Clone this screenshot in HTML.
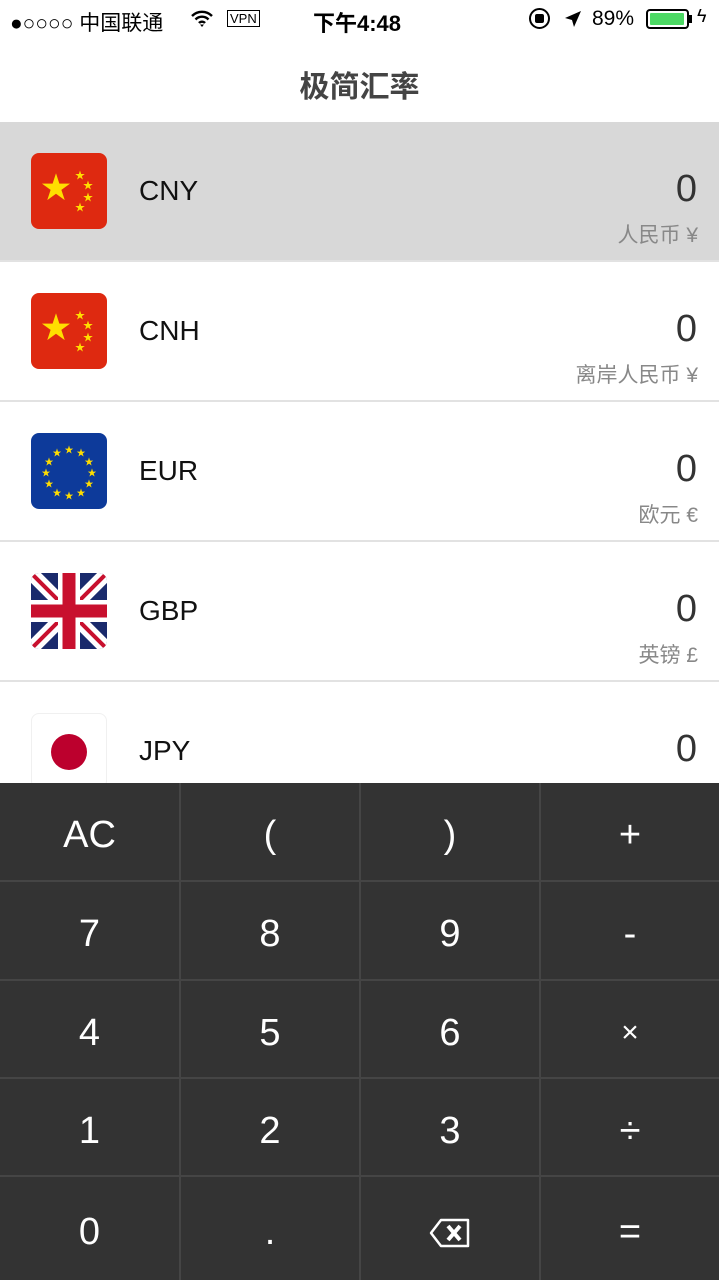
<!DOCTYPE html>
<html><head><meta charset="utf-8"><style>
*{margin:0;padding:0;box-sizing:border-box}
body{width:719px;height:1280px;overflow:hidden;background:#fff;position:relative;font-family:"Liberation Sans","Noto Sans CJK SC",sans-serif}
.abs{position:absolute}
.row{position:absolute;left:0;width:719px;height:140px;border-bottom:2px solid #e2e2e2;background:#fff}
.flag{position:absolute;left:31px;top:31px;width:76px;height:76px;border-radius:8px;overflow:hidden}
.code{position:absolute;left:139px;top:53px;font-size:28px;color:#111}
.val{position:absolute;right:22px;top:46px;font-size:38px;color:#333;font-weight:300}
.name{position:absolute;right:21px;top:97px;font-size:21px;color:#888}
.kb{position:absolute;left:0;top:783px;width:719px;height:497px;background:#454545}
.k{position:absolute;background:#333;color:#fff;font-size:38px;display:flex;align-items:center;justify-content:center;font-weight:300;padding-top:8px}
</style></head><body>
<div class="abs" style="left:10px;top:7px;font-size:21px;color:#000;white-space:nowrap">●○○○○ 中国联通</div>
<svg class="abs" style="left:190px;top:10px" width="24" height="18" viewBox="0 0 24 18"><path d="M2 6a14 14 0 0 1 20 0M5.5 9.5a9 9 0 0 1 13 0M9 13a4 4 0 0 1 6 0" stroke="#000" stroke-width="2.4" fill="none"/><path d="M12 17l-2-2.5h4z" fill="#000"/></svg>
<div class="abs" style="left:227px;top:10px;font-size:13px;border:1px solid #000;padding:0 2px;line-height:15px">VPN</div>
<div class="abs" style="left:313px;top:6px;font-size:22px;font-weight:bold">下午4:48</div>
<div class="abs" style="left:529px;top:8px;width:21px;height:21px;border:2px solid #000;border-radius:50%"></div>
<div class="abs" style="left:535px;top:14px;width:9px;height:9px;background:#000;border-radius:2px"></div>
<svg class="abs" style="left:563px;top:9px" width="20" height="20"><path d="M18 2L2 9l7 2 2 7z" fill="#000"/></svg>
<div class="abs" style="left:592px;top:7px;font-size:21px">89%</div>
<div class="abs" style="left:646px;top:9px;width:43px;height:20px;border:2px solid #000;border-radius:4px;padding:2px"><div style="width:34px;height:12px;background:#4cd964;border-radius:1px"></div></div>
<div class="abs" style="left:689px;top:15px;width:3px;height:8px;background:#000"></div>
<div class="abs" style="left:697px;top:6px;font-size:18px">ϟ</div>
<div class="abs" style="left:0;top:62px;width:719px;text-align:center;font-size:30px;color:#444;font-weight:bold">极简汇率</div>

<div class="row" style="top:122px;background:#d8d8d8">
<div class="flag" style="background:#de2910"><svg width="76" height="76"><text x="10" y="45" font-size="30" fill="#ffde00">★</text><text x="44" y="26" font-size="10" fill="#ffde00">★</text><text x="52" y="36" font-size="10" fill="#ffde00">★</text><text x="52" y="48" font-size="10" fill="#ffde00">★</text><text x="44" y="58" font-size="10" fill="#ffde00">★</text></svg></div>
<div class="code">CNY</div><div class="val">0</div><div class="name">人民币 ¥</div></div>
<div class="row" style="top:262px">
<div class="flag" style="background:#de2910"><svg width="76" height="76"><text x="10" y="45" font-size="30" fill="#ffde00">★</text><text x="44" y="26" font-size="10" fill="#ffde00">★</text><text x="52" y="36" font-size="10" fill="#ffde00">★</text><text x="52" y="48" font-size="10" fill="#ffde00">★</text><text x="44" y="58" font-size="10" fill="#ffde00">★</text></svg></div>
<div class="code">CNH</div><div class="val">0</div><div class="name">离岸人民币 ¥</div></div>
<div class="row" style="top:402px">
<div class="flag" style="background:#0d3a9a"><svg width="76" height="76"><g fill="#ffdd00" font-size="9" text-anchor="middle"><text x="38" y="20">★</text><text x="50" y="23">★</text><text x="58" y="32">★</text><text x="61" y="43">★</text><text x="58" y="54">★</text><text x="50" y="63">★</text><text x="38" y="66">★</text><text x="26" y="63">★</text><text x="18" y="54">★</text><text x="15" y="43">★</text><text x="18" y="32">★</text><text x="26" y="23">★</text></g></svg></div>
<div class="code">EUR</div><div class="val">0</div><div class="name">欧元 €</div></div>
<div class="row" style="top:542px">
<div class="flag" style="background:#1a2a6c"><svg width="76" height="76"><path d="M0 0L76 76M76 0L0 76" stroke="#fff" stroke-width="14"/><path d="M0 0L76 76M76 0L0 76" stroke="#c8102e" stroke-width="4"/><path d="M38 0V76M0 38H76" stroke="#fff" stroke-width="22"/><path d="M38 0V76M0 38H76" stroke="#c8102e" stroke-width="13"/></svg></div>
<div class="code">GBP</div><div class="val">0</div><div class="name">英镑 £</div></div>
<div class="row" style="top:682px">
<div class="flag" style="background:#fff;border:1px solid #f0f0f0"><div style="position:absolute;left:19px;top:20px;width:36px;height:36px;border-radius:50%;background:#bc002d"></div></div>
<div class="code">JPY</div><div class="val">0</div><div class="name">日元 ¥</div></div>

<div class="kb">
<div class="k" style="left:0;top:0;width:179px;height:97px">AC</div>
<div class="k" style="left:181px;top:0;width:178px;height:97px">(</div>
<div class="k" style="left:361px;top:0;width:178px;height:97px">)</div>
<div class="k" style="left:541px;top:0;width:178px;height:97px">+</div>
<div class="k" style="left:0;top:99px;width:179px;height:97px">7</div>
<div class="k" style="left:181px;top:99px;width:178px;height:97px">8</div>
<div class="k" style="left:361px;top:99px;width:178px;height:97px">9</div>
<div class="k" style="left:541px;top:99px;width:178px;height:97px">-</div>
<div class="k" style="left:0;top:198px;width:179px;height:96px">4</div>
<div class="k" style="left:181px;top:198px;width:178px;height:96px">5</div>
<div class="k" style="left:361px;top:198px;width:178px;height:96px">6</div>
<div class="k" style="left:541px;top:198px;width:178px;height:96px;font-size:30px">×</div>
<div class="k" style="left:0;top:296px;width:179px;height:96px">1</div>
<div class="k" style="left:181px;top:296px;width:178px;height:96px">2</div>
<div class="k" style="left:361px;top:296px;width:178px;height:96px">3</div>
<div class="k" style="left:541px;top:296px;width:178px;height:96px">÷</div>
<div class="k" style="left:0;top:394px;width:179px;height:103px">0</div>
<div class="k" style="left:181px;top:394px;width:178px;height:103px">.</div>
<div class="k" style="left:361px;top:394px;width:178px;height:103px"><svg width="42" height="30" viewBox="0 0 42 30"><path d="M12 2H39V28H12L2 15Z" stroke="#fff" stroke-width="2.5" fill="none" stroke-linejoin="round"/><path d="M19 8L31 22M31 8L19 22" stroke="#fff" stroke-width="4"/></svg></div>
<div class="k" style="left:541px;top:394px;width:178px;height:103px">=</div>
</div>
</body></html>
